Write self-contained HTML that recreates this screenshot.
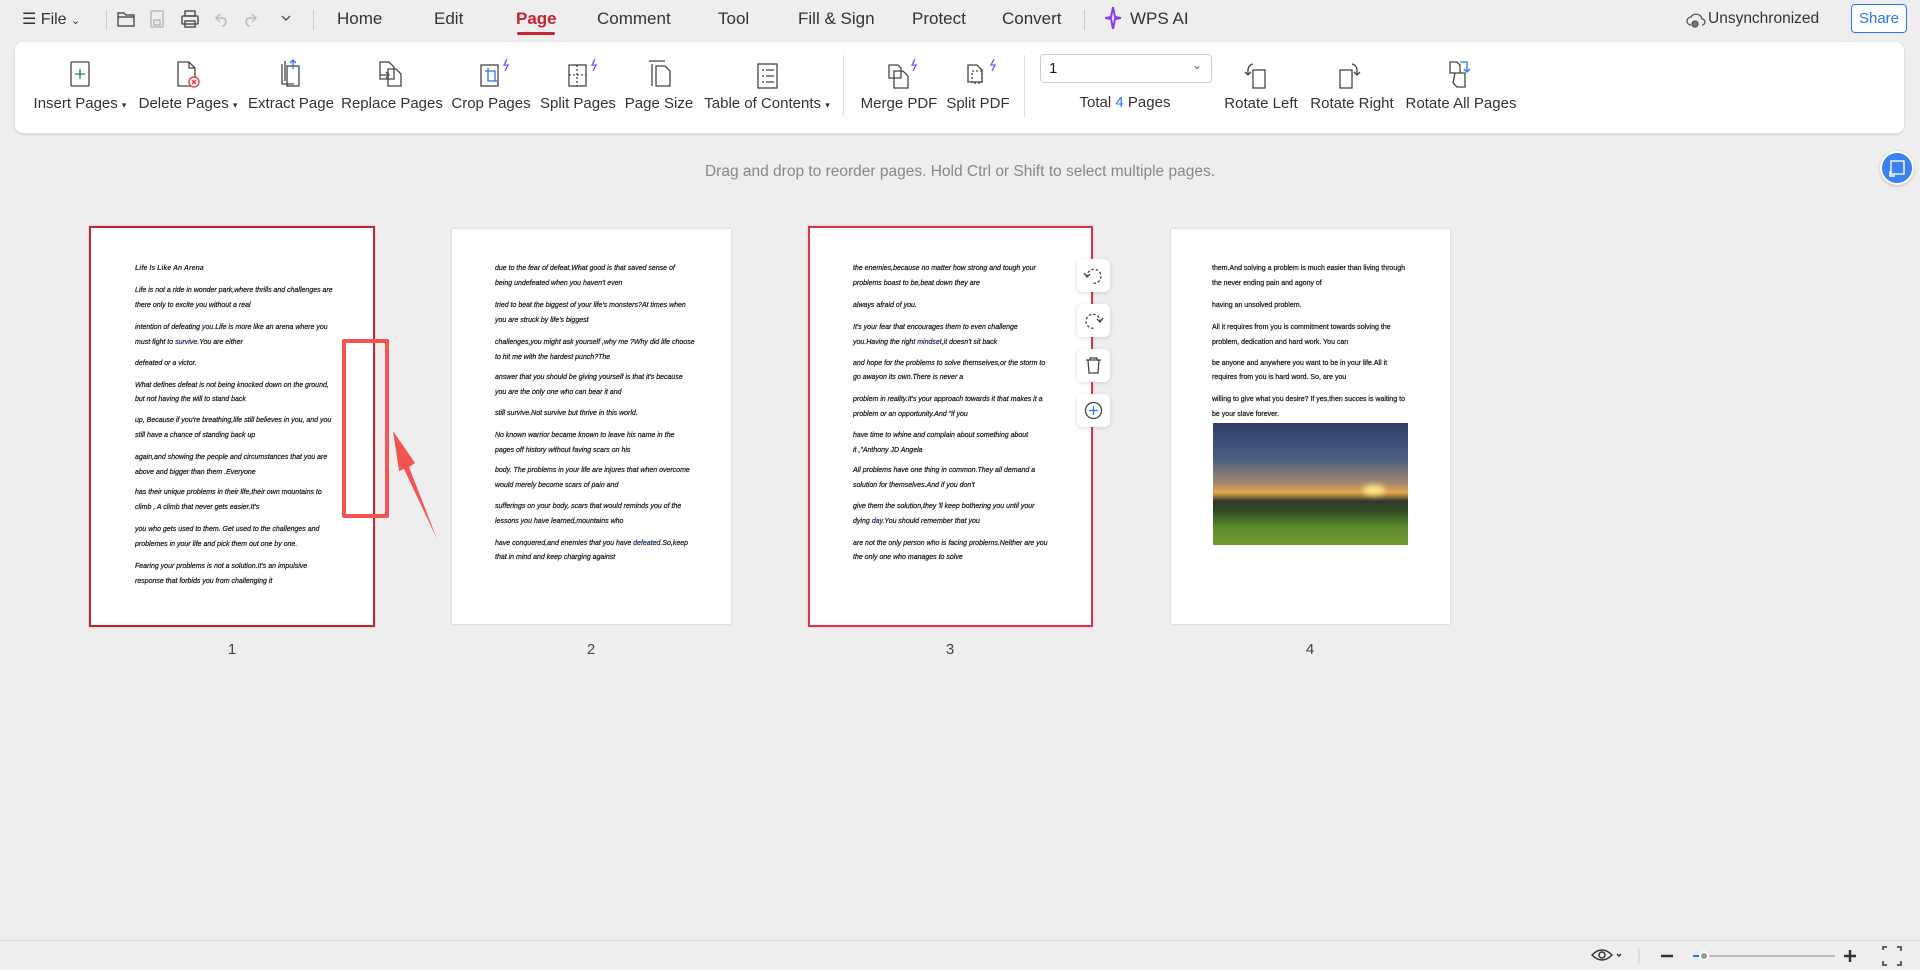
<!DOCTYPE html>
<html><head><meta charset="utf-8"><style>
*{margin:0;padding:0;box-sizing:border-box}
body{width:1920px;height:970px;background:#eeeeee;font-family:"Liberation Sans",sans-serif;position:relative;overflow:hidden;color:#222}
.a{position:absolute;white-space:nowrap}
.tab{font-size:17px;color:#333;top:9px}
.lbl{font-size:15px;color:#333;top:95px;transform:translateX(-50%)}
.pg{position:absolute;background:#fff;box-shadow:0 0 2px rgba(0,0,0,.2)}
.t{position:absolute;font-size:7px;font-style:italic;color:#222;white-space:nowrap;-webkit-text-stroke:0.25px #222}
.t4{position:absolute;font-size:7px;color:#222;white-space:nowrap;-webkit-text-stroke:0.25px #222}
.num{position:absolute;top:641px;font-size:15px;color:#444;transform:translateX(-50%)}
.sb{position:absolute;left:1077px;width:33px;height:33px;background:#fff;border-radius:6px;box-shadow:0 1px 4px rgba(0,0,0,.15)}
</style></head><body>
<!-- top bar -->
<div class="a" style="left:22px;top:9px;font-size:16px;color:#333">☰ File <span style="font-size:11px">⌄</span></div>
<div class="a" style="left:106px;top:10px;width:1px;height:20px;background:#ccc"></div>
<svg class="a" style="left:116px;top:8px" width="190" height="22" fill="none" stroke="#555" stroke-width="1.5">
<path d="M2 5h6l2 2h8v11H2z M2 9h16"/>
<rect x="35" y="3" width="12" height="16" rx="1" stroke="#bbb"/><rect x="38" y="12" width="6" height="5" stroke="#bbb"/>
<rect x="66" y="8" width="16" height="8" rx="1"/><rect x="69" y="3" width="10" height="5"/><rect x="69" y="13" width="10" height="6"/>
<path d="M104 6l-4 4 4 4 M100 10h6a4 4 0 0 1 0 8" stroke="#bbb"/>
<path d="M136 6l4 4-4 4 M140 10h-6a4 4 0 0 0 0 8" stroke="#bbb"/>
<path d="M166 8l4 4 4-4"/></svg>
<div class="a" style="left:313px;top:10px;width:1px;height:20px;background:#ccc"></div>
<div class="a tab" style="left:337px">Home</div>
<div class="a tab" style="left:434px">Edit</div>
<div class="a tab" style="left:516px;color:#c7222f;font-weight:bold">Page</div>
<div class="a" style="left:517px;top:32px;width:38px;height:3px;background:#c7222f;border-radius:2px"></div>
<div class="a tab" style="left:597px">Comment</div>
<div class="a tab" style="left:718px">Tool</div>
<div class="a tab" style="left:798px">Fill &amp; Sign</div>
<div class="a tab" style="left:912px">Protect</div>
<div class="a tab" style="left:1002px">Convert</div>
<div class="a" style="left:1084px;top:10px;width:1px;height:20px;background:#ccc"></div>
<svg class="a" style="left:1105px;top:7px" width="16" height="22"><path d="M8 0 L10 10 L16 11 L10 12 L8 22 L6 12 L0 11 L6 10Z" fill="none" stroke="#8a3cf0" stroke-width="2"/></svg>
<div class="a tab" style="left:1130px">WPS AI</div>
<svg class="a" style="left:1686px;top:10px" width="20" height="18" fill="none" stroke="#555" stroke-width="1.3"><path d="M5 15a4 4 0 0 1 0-8 6 6 0 0 1 11 2 3 3 0 0 1 0 6"/><circle cx="9" cy="14" r="3" fill="#777"/></svg>
<div class="a" style="left:1708px;top:10px;font-size:15.5px;color:#333">Unsynchronized</div>
<div class="a" style="left:1851px;top:4px;width:56px;height:29px;border:1px solid #2b74f0;border-radius:4px;background:#fff;color:#2b74f0;font-size:15px;text-align:center;line-height:27px">Share</div>
<!-- toolbar -->
<div class="a" style="left:15px;top:42px;width:1889px;height:91px;background:#fff;border-radius:8px;box-shadow:0 1px 3px rgba(0,0,0,.15)"></div>
<svg class="a" style="left:0;top:56px" width="1500" height="40" fill="none" stroke="#444" stroke-width="1.3">
<rect x="71" y="6" width="18" height="24" rx="1"/><path d="M80 13v10M75 18h10" stroke="#1a8a3a"/>
<path d="M178 6h11l6 6v18h-17z M189 6v6h6"/><circle cx="194" cy="26" r="5" stroke="#d33" fill="#fff"/><path d="M192 24l4 4M196 24l-4 4" stroke="#d33"/>
<path d="M282 8v20h12 M285 5v20"/><rect x="287" y="10" width="12" height="20"/><path d="M293 4v9M290 7l3-3 3 3" stroke="#2b74f0"/>
<path d="M380 6h9l5 5v12h-14z M386 16l3 3-3 3 M380 19h9"/><path d="M388 13h8l5 5v12h-13z"/>
<rect x="481" y="9" width="17" height="21"/><path d="M485 15h10v10M488 12v13h10" stroke="#2b74f0"/><path d="M507 3l-3 6h4l-3 6" stroke="#5a5af0"/>
<rect x="569" y="9" width="17" height="21"/><path d="M577 9v21M569 19h17" stroke-dasharray="2 2"/><path d="M595 3l-3 6h4l-3 6" stroke="#5a5af0"/>
<path d="M652 8v22M649 5h16"/><path d="M656 10h9l5 5v15h-14z"/>
<rect x="758" y="8" width="19" height="24"/><path d="M762 14h2M766 14h8M762 20h2M766 20h8M762 26h2M766 26h8"/>
<path d="M889 9h9l3 3v10h-12z"/><path d="M894 15h9l5 5v12h-14z"/><path d="M915 3l-3 6h4l-3 6" stroke="#5a5af0"/>
<path d="M968 9h9l5 5v12h-14z"/><rect x="972" y="15" width="10" height="12" stroke-dasharray="2 2"/><path d="M994 3l-3 6h4l-3 6" stroke="#5a5af0"/>
<rect x="1253" y="14" width="12" height="18"/><path d="M1253 8a6 6 0 0 0-5 6v5M1245 16l3 3 3-3"/>
<rect x="1340" y="14" width="12" height="18"/><path d="M1352 8a6 6 0 0 1 5 6v5M1354 16l3 3 3-3"/>
<path d="M1450 6h7l3 3v8h-10z M1455 17h10v14h-8l-4-4z"/><path d="M1460 6h7v10M1464 13l3 3 3-3" stroke="#2b74f0"/>
</svg>
<div class="a lbl" style="left:80px">Insert Pages <span style="font-size:9px">▾</span></div>
<div class="a lbl" style="left:188px">Delete Pages <span style="font-size:9px">▾</span></div>
<div class="a lbl" style="left:291px">Extract Page</div>
<div class="a lbl" style="left:392px">Replace Pages</div>
<div class="a lbl" style="left:491px">Crop Pages</div>
<div class="a lbl" style="left:578px">Split Pages</div>
<div class="a lbl" style="left:659px">Page Size</div>
<div class="a lbl" style="left:767px">Table of Contents <span style="font-size:9px">▾</span></div>
<div class="a" style="left:843px;top:55px;width:1px;height:62px;background:#ddd"></div>
<div class="a lbl" style="left:899px">Merge PDF</div>
<div class="a lbl" style="left:978px">Split PDF</div>
<div class="a" style="left:1024px;top:55px;width:1px;height:62px;background:#ddd"></div>
<div class="a" style="left:1040px;top:54px;width:172px;height:29px;border:1px solid #ccc;border-radius:4px;background:#fff;font-size:15px;padding:5px 8px">1<span style="position:absolute;right:9px;top:3px;font-size:12px;color:#666">⌄</span></div>
<div class="a lbl" style="left:1125px;top:94px">Total <span style="color:#2b74f0">4</span> Pages</div>
<div class="a lbl" style="left:1261px">Rotate Left</div>
<div class="a lbl" style="left:1352px">Rotate Right</div>
<div class="a lbl" style="left:1461px">Rotate All Pages</div>
<div class="a" style="left:0;width:1920px;top:163px;text-align:center;font-size:15.5px;color:#888">Drag and drop to reorder pages. Hold Ctrl or Shift to select multiple pages.</div>
<div class="a" style="left:1880px;top:151px;width:34px;height:34px;border-radius:50%;background:#3b82f0;border:2px solid #fff;box-shadow:0 1px 3px rgba(0,0,0,.2)"><svg width="30" height="30" fill="none" stroke="#fff" stroke-width="1.4"><rect x="9" y="8" width="13" height="13"/><path d="M8 18v5h5"/></svg></div>
<!-- pages -->
<div class="pg" style="left:89px;top:226px;width:286px;height:401px;border:2px solid #c0252f"></div>
<div class="pg" style="left:452px;top:229px;width:279px;height:395px"></div>
<div class="pg" style="left:808px;top:226px;width:285px;height:401px;border:2px solid #e0334a"></div>
<div class="pg" style="left:1171px;top:229px;width:279px;height:395px"></div>
<div class="t" style="left:135px;top:265px;font-weight:bold;-webkit-text-stroke:0">Life Is Like An Arena</div>
<div class="t" style="left:135px;top:287px">Life is not a ride in wonder park,where thrills and challenges are</div>
<div class="t" style="left:135px;top:302px">there only to excite you without a real</div>
<div class="t" style="left:135px;top:324px">intention of defeating <span style="color:#2b4cc0">you.</span>Life is more like an arena where you</div>
<div class="t" style="left:135px;top:339px">must fight to <span style="color:#2b4cc0">survive.</span>You are either</div>
<div class="t" style="left:135px;top:360px">defeated or a victor.</div>
<div class="t" style="left:135px;top:382px">What defines defeat is not being knocked down on the ground,</div>
<div class="t" style="left:135px;top:396px">but not having the will to stand back</div>
<div class="t" style="left:135px;top:417px">up,  Because if you're breathing,life still believes in you, and you</div>
<div class="t" style="left:135px;top:432px">still have a chance of standing back up</div>
<div class="t" style="left:135px;top:454px">again,and showing the people and circumstances that you are</div>
<div class="t" style="left:135px;top:469px">above and bigger than them .Everyone</div>
<div class="t" style="left:135px;top:489px">has their unique problems in their life,their own mountains to</div>
<div class="t" style="left:135px;top:504px">climb ,  A climb that never gets easier.It's</div>
<div class="t" style="left:135px;top:526px">you who gets used to them. Get used to the challenges and</div>
<div class="t" style="left:135px;top:541px">problemes in your life and pick them out one by one.</div>
<div class="t" style="left:135px;top:563px">Fearing your problems is not a solution.It's an impulsive</div>
<div class="t" style="left:135px;top:578px">response that forbids you from challenging it</div>

<div class="t" style="left:495px;top:265px">due to the fear of defeat.What good is that saved sense of</div>
<div class="t" style="left:495px;top:280px">being undefeated when you haven't even</div>
<div class="t" style="left:495px;top:302px">tried to beat the biggest of your life's monsters?At times when</div>
<div class="t" style="left:495px;top:317px">you are struck by life's biggest</div>
<div class="t" style="left:495px;top:339px">challenges,you might ask yourself ,why me ?Why did life choose</div>
<div class="t" style="left:495px;top:354px">to hit me with the hardest punch?The</div>
<div class="t" style="left:495px;top:374px">answer that you should be giving yourself is that it's because</div>
<div class="t" style="left:495px;top:389px">you are the only one who can bear it and</div>
<div class="t" style="left:495px;top:410px">still survive.Not survive but thrive in this world.</div>
<div class="t" style="left:495px;top:432px">No known warrior became known to leave his name in the</div>
<div class="t" style="left:495px;top:447px">pages off history without faving scars on his</div>
<div class="t" style="left:495px;top:467px">body. The problems in your life are injures that when overcome</div>
<div class="t" style="left:495px;top:482px">would merely become scars of pain and</div>
<div class="t" style="left:495px;top:503px">sufferings on your body, scars that would reminds you of the</div>
<div class="t" style="left:495px;top:518px">lessons you have learned,mountains who</div>
<div class="t" style="left:495px;top:540px">have conquered,and enemies that you have <span style="color:#2b4cc0">defeated.</span>So,keep</div>
<div class="t" style="left:495px;top:554px">that in mind and keep charging against</div>

<div class="t" style="left:853px;top:265px">the enemies,because no matter how strong and tough your</div>
<div class="t" style="left:853px;top:280px">problems boast to be,beat down they are</div>
<div class="t" style="left:853px;top:302px">always afraid of you.</div>
<div class="t" style="left:853px;top:324px">It's your fear that encourages them to even challenge</div>
<div class="t" style="left:853px;top:339px">you.Having the right <span style="color:#2b4cc0">mindset</span>,it doesn't sit back</div>
<div class="t" style="left:853px;top:360px">and hope for the problems to solve themselves,or the storm to</div>
<div class="t" style="left:853px;top:374px">go awayon its own.There is never a</div>
<div class="t" style="left:853px;top:396px">problem in reality.It's your approach towards it that makes it a</div>
<div class="t" style="left:853px;top:411px">problem or an opportunity.And "if you</div>
<div class="t" style="left:853px;top:432px">have time to whine and complain about something about</div>
<div class="t" style="left:853px;top:447px">it ,"Anthony JD Angela</div>
<div class="t" style="left:853px;top:467px">All problems have one thing in common.They all demand a</div>
<div class="t" style="left:853px;top:482px">solution for themselves.And if you don't</div>
<div class="t" style="left:853px;top:503px">give them the solution,they 'll keep bothering you until your</div>
<div class="t" style="left:853px;top:518px">dying <span style="color:#2b4cc0">day.</span>You should remember that you</div>
<div class="t" style="left:853px;top:540px">are not the only person who is facing problems.Neither are you</div>
<div class="t" style="left:853px;top:554px">the only one who manages to solve</div>

<div class="t4" style="left:1212px;top:265px">them.And solving a problem is much easier than living through</div>
<div class="t4" style="left:1212px;top:280px">the never ending pain and agony of</div>
<div class="t4" style="left:1212px;top:302px">having an unsolved problem.</div>
<div class="t4" style="left:1212px;top:324px">All it requires from you is commitment towards solving the</div>
<div class="t4" style="left:1212px;top:339px">problem, dedication and hard work. You can</div>
<div class="t4" style="left:1212px;top:360px">be anyone and anywhere you want to be in your life.All it</div>
<div class="t4" style="left:1212px;top:374px">requires from you is hard word. So, are you</div>
<div class="t4" style="left:1212px;top:396px">willing to give what you desire? If yes,then succes is waiting to</div>
<div class="t4" style="left:1212px;top:411px">be your slave forever.</div>
<div class="a" style="left:1213px;top:423px;width:195px;height:122px;background:linear-gradient(180deg,#2c3f66 0%,#4d5e80 30%,#a58a6e 50%,#e8a84a 57%,#2f3a2c 64%,#2e4a24 72%,#5d8a2c 85%,#6f9c30 100%)"><div style="position:absolute;left:150px;top:62px;width:22px;height:10px;border-radius:50%;background:#ffe88a;filter:blur(3px)"></div></div>
<!-- side buttons -->
<div class="sb" style="top:259px"><svg width="33" height="33" fill="none" stroke="#444" stroke-width="1.3"><path d="M10 18a7 7 0 1 1 5 6" stroke-dasharray="2.5 2"/><path d="M7 14l3 4 3-3"/></svg></div>
<div class="sb" style="top:304px"><svg width="33" height="33" fill="none" stroke="#444" stroke-width="1.3"><path d="M23 18a7 7 0 1 0-5 6" stroke-dasharray="2.5 2"/><path d="M26 14l-3 4-3-3"/></svg></div>
<div class="sb" style="top:349px"><svg width="33" height="33" fill="none" stroke="#444" stroke-width="1.3"><path d="M9 11h15M13 11v-2h7v2M11 11l1 13h9l1-13"/></svg></div>
<div class="sb" style="top:394px"><svg width="33" height="33" fill="none" stroke-width="1.3"><circle cx="16.5" cy="16.5" r="8" stroke="#444"/><path d="M16.5 12v9M12 16.5h9" stroke="#2b74f0"/></svg></div>
<div class="num" style="left:232px">1</div>
<div class="num" style="left:591px">2</div>
<div class="num" style="left:950px">3</div>
<div class="num" style="left:1310px">4</div>
<!-- annotation -->
<div class="a" style="left:342px;top:339px;width:47px;height:179px;border:4px solid #f25454;border-radius:2px"></div>
<svg class="a" style="left:385px;top:425px" width="60" height="120"><path d="M52 114 L24 42 L30 38 L8 6 L14 46 L19 44 Z" fill="#f25454"/></svg>
<!-- status bar -->
<div class="a" style="left:0;top:940px;width:1920px;height:1px;background:#d8d8d8"></div>
<svg class="a" style="left:1590px;top:944px" width="330" height="22" fill="none" stroke="#333" stroke-width="1.5">
<path d="M2 11q10-10 20 0q-10 10-20 0z"/><circle cx="12" cy="11" r="3"/><path d="M27 10l2 2 2-2"/>
<path d="M49 4v16" stroke="#ccc" stroke-width="1"/>
<path d="M71 12h12" stroke-width="2.5"/>
<path d="M103 12h10" stroke="#2b74f0" stroke-width="2"/><path d="M113 12h132" stroke="#bbb" stroke-width="2"/><circle cx="114" cy="12" r="4" fill="#999" stroke="#fff" stroke-width="2"/>
<path d="M254 12h12M260 6v12" stroke-width="2.5"/>
<path d="M293 6v-3h4M307 3h4v4M311 17v4h-4M297 21h-4v-4"/></svg>
</body></html>
